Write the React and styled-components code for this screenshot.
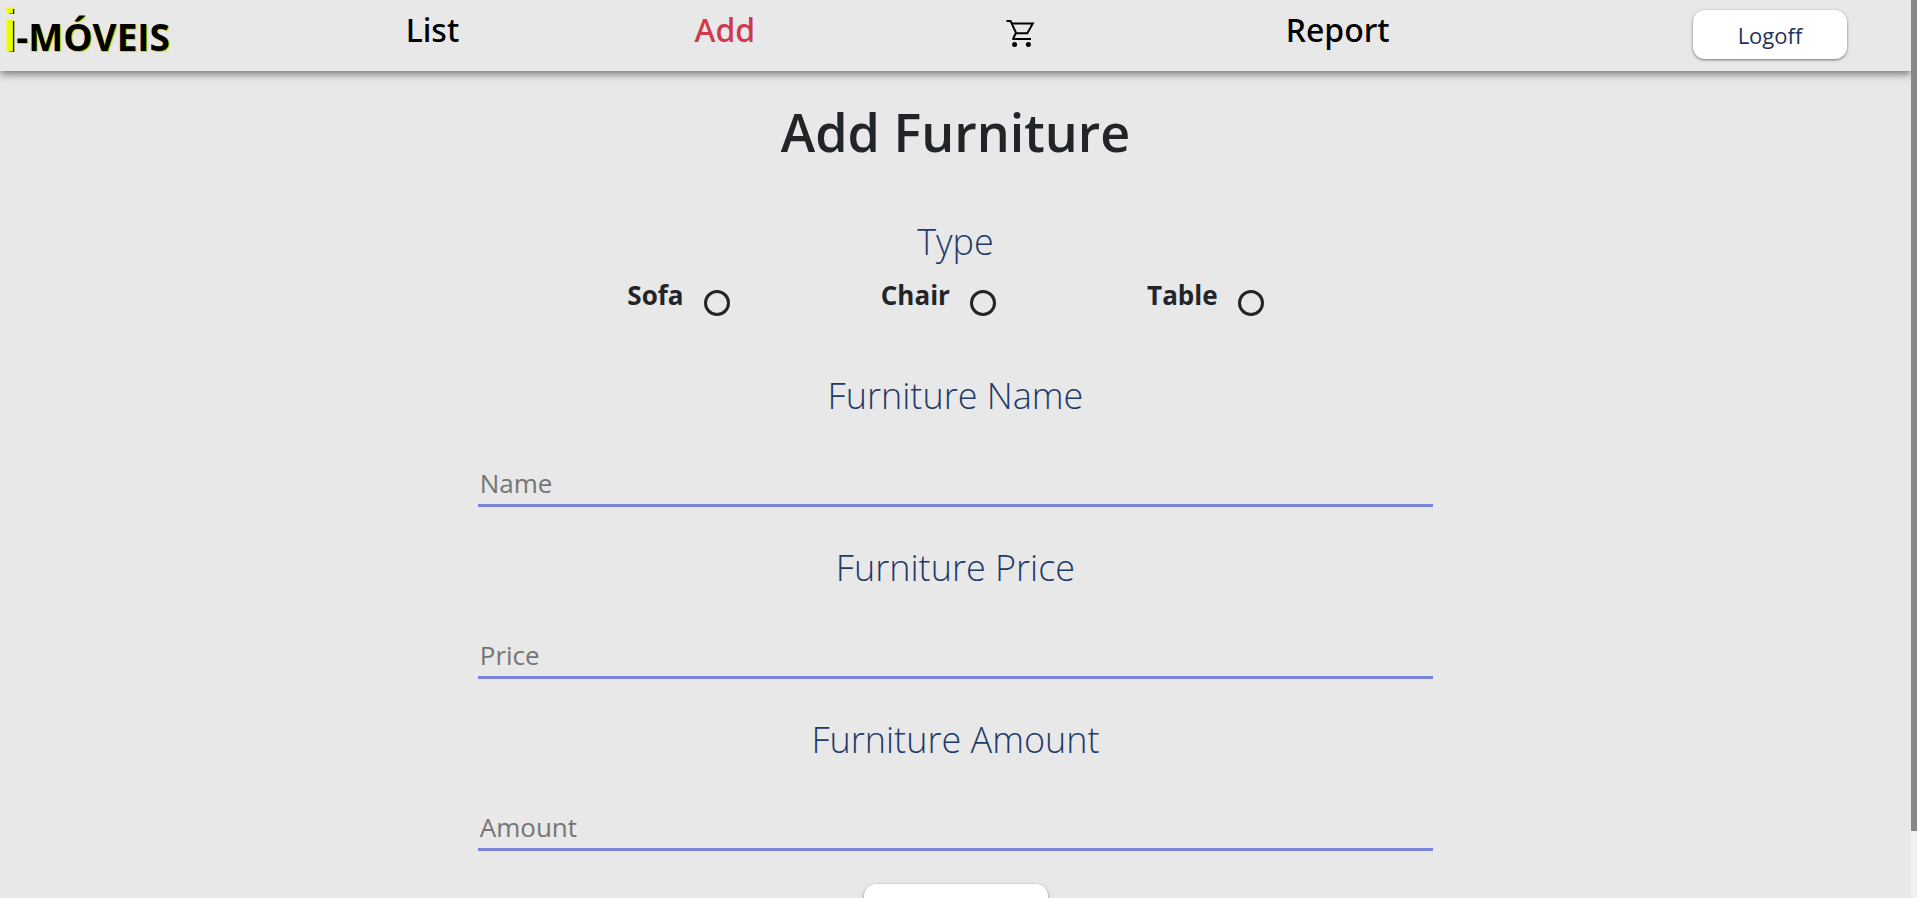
import React from "react";
import styled, { createGlobalStyle } from "styled-components";

const GlobalStyle = createGlobalStyle`
  *, *::before, *::after { box-sizing: border-box; }
  body {
    margin: 0;
    background: #e8e8e8;
    color: #212529;
    font-family: "Segoe UI", "Open Sans", "Noto Sans", sans-serif;
  }
`;

const Shell = styled.div`
  display: flex;
  height: 100vh;
`;

const Page = styled.div`
  flex: 1;
  min-width: 0;
  overflow: hidden auto;
  scrollbar-width: none;
`;

const ScrollRail = styled.div`
  flex: none;
  width: 6px;
  background: #f1f1f1;
`;

const ScrollThumb = styled.div`
  height: 92.5%;
  background: #888;
`;

const Header = styled.header`
  display: flex;
  align-items: flex-start;
  height: 71px;
  padding-right: 64px;
  background: #e8e8e8;
  box-shadow: 0 3px 8px rgba(0, 0, 0, 0.5);
`;

const Logo = styled.a`
  flex: none;
  display: flex;
  align-items: baseline;
  width: 172px;
  padding-left: 3px;
  color: #000;
  font-size: 37px;
  font-weight: 700;
  line-height: 73px;
  text-decoration: none;
  text-shadow: 1px 1px 1px #c8d400;
`;

const LogoInitial = styled.span`
  color: #eaff00;
  font-family: "Liberation Sans", Arial, sans-serif;
  font-size: 60px;
  font-weight: 400;
  line-height: 60px;
  -webkit-text-stroke: 1px #eaff00;
  text-shadow: 2px 1px 0 #222;
`;

const Nav = styled.nav`
  flex: 1;
  display: flex;
  justify-content: space-between;
  margin: 0 16% 0 12%;
  padding: 0 8px 0 12px;
`;

const NavLink = styled.a`
  display: flex;
  align-items: center;
  height: 58px;
  padding: ${(p) => (p.$icon ? "10px 14px 0" : "0")};
  color: ${(p) => (p.$active ? "#d0384f" : "#000")};
  font-family: "Segoe UI", "Noto Sans", "Open Sans", sans-serif;
  font-size: 32px;
  font-weight: 500;
  text-decoration: none;
`;

const Button = styled.button`
  width: ${(p) => (p.$large ? "184px" : "154px")};
  height: ${(p) => (p.$large ? "64px" : "49px")};
  border: 0;
  border-radius: 12px;
  background: #fff;
  color: #1f3260;
  font: 400 22px/22px "Segoe UI", "Open Sans", "Noto Sans", sans-serif;
  box-shadow: 0 1px 3px rgba(0, 0, 0, 0.5);
`;

const LogoffSlot = styled.div`
  padding-top: 10px;
`;

const Form = styled.form`
  display: flex;
  flex-direction: column;
  align-items: center;
  width: 50%;
  margin: 0 auto;
  padding-bottom: 22px;
`;

const Title = styled.h1`
  margin: 25px 0 0;
  font-size: 52px;
  font-weight: 600;
  line-height: 72px;
`;

const TypeGroup = styled.fieldset`
  width: 100%;
  min-width: 0;
  margin: 49px 0 0;
  padding: 0;
  border: 0;
`;

const headingText = `
  color: #1f3a68;
  font-size: 36px;
  font-weight: 300;
  line-height: 50px;
  text-align: center;
`;

const Legend = styled.legend`
  ${headingText}
  width: 100%;
  padding: 0;
`;

const Options = styled.div`
  display: flex;
  justify-content: space-around;
  padding: 0 84px;
`;

const Option = styled.label`
  display: flex;
  align-items: flex-end;
  gap: 20px;
  height: 49px;
  padding-right: 20px;
  font-size: 26px;
  font-weight: 700;
  line-height: 41px;
`;

const Radio = styled.input`
  appearance: none;
  width: 26px;
  height: 26px;
  margin: 0;
  border: 3px solid #212529;
  border-radius: 50%;
  &:checked { background: radial-gradient(#212529 40%, transparent 45%); }
`;

const Field = styled.div`
  display: flex;
  flex-direction: column;
  width: 100%;
  margin-top: ${(p) => (p.$first ? "55px" : "36px")};
`;

const FieldLabel = styled.label`
  ${headingText}
`;

const Input = styled.input`
  width: 100%;
  height: 48px;
  margin-top: 38px;
  padding: 2px 2px 0;
  border: 0;
  border-bottom: 3px solid #7986d8;
  outline: 0;
  background: transparent;
  color: #212529;
  font: 400 26px/40px "Segoe UI", "Open Sans", "Noto Sans", sans-serif;
  &::placeholder { color: #757575; opacity: 1; }
`;

const Submit = styled.div`
  margin-top: 33px;
`;

const CartIcon = () => (
  <svg width="32" height="32" viewBox="0 0 32 32" fill="none" stroke="currentColor" strokeWidth="2" aria-hidden="true">
    <path d="M2.5 3H6.6L12 14.8L9.3 20.2V21H27" />
    <path d="M7.5 5.5H28.8L23.3 15.3H12" />
    <circle cx="10.6" cy="26.6" r="2.5" fill="currentColor" stroke="none" />
    <circle cx="24.4" cy="26.6" r="2.5" fill="currentColor" stroke="none" />
  </svg>
);

const types = ["Sofa", "Chair", "Table"];
const fields = ["Name", "Price", "Amount"];

export default function App() {
  return (
    <Shell>
      <GlobalStyle />
      <Page>
        <Header>
          <Logo href="#home">
            <LogoInitial>i</LogoInitial>-MÓVEIS
          </Logo>
          <Nav>
            <NavLink href="#list">List</NavLink>
            <NavLink href="#add" $active>Add</NavLink>
            <NavLink href="#cart" $icon aria-label="Cart">
              <CartIcon />
            </NavLink>
            <NavLink href="#report">Report</NavLink>
          </Nav>
          <LogoffSlot>
            <Button type="button">Logoff</Button>
          </LogoffSlot>
        </Header>
        <main>
          <Form>
            <Title>Add Furniture</Title>
            <TypeGroup>
              <Legend>Type</Legend>
              <Options>
                {types.map((type) => (
                  <Option key={type}>
                    {type}
                    <Radio type="radio" name="type" value={type} />
                  </Option>
                ))}
              </Options>
            </TypeGroup>
            {fields.map((field, i) => (
              <Field key={field} $first={i === 0}>
                <FieldLabel htmlFor={field}>Furniture {field}</FieldLabel>
                <Input id={field} name={field} placeholder={field} />
              </Field>
            ))}
            <Submit>
              <Button type="submit" $large>Add</Button>
            </Submit>
          </Form>
        </main>
      </Page>
      <ScrollRail aria-hidden="true">
        <ScrollThumb />
      </ScrollRail>
    </Shell>
  );
}
